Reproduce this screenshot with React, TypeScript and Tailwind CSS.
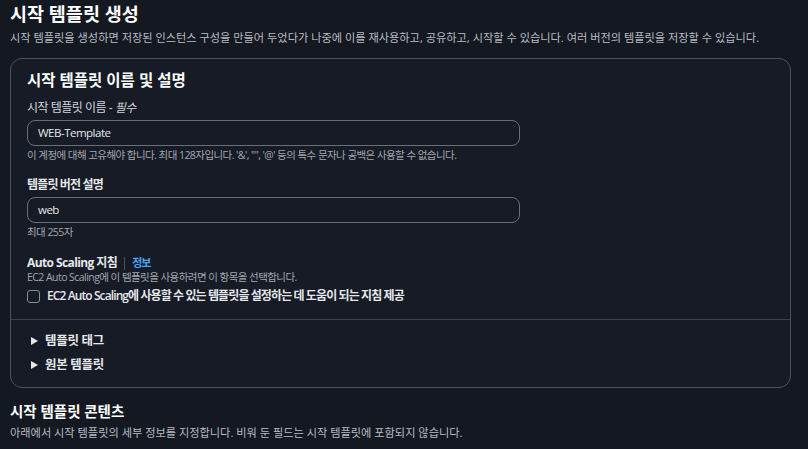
import React from 'react'

const FONT = { fontFamily: '"Open Sans", "Noto Sans CJK KR", sans-serif' }

function Field({ label, value, hint }: { label: React.ReactNode; value: string; hint: string }) {
  return (
    <div className="flex flex-col">
      <div className="text-[12px] tracking-[-0.5px] leading-[16px] text-[#d1d5db] mb-[4px]">{label}</div>
      <div className="w-[493px] h-[26px] rounded-[8px] border border-[#6b6e76] bg-[#161b25] flex items-center px-[10px] text-[11.5px] tracking-[-0.5px] text-[#e5e7eb]">
        {value}
      </div>
      <div className="text-[10.5px] tracking-[-0.55px] leading-[14px] text-[#a3a7b0] mt-[2px]">{hint}</div>
    </div>
  )
}

function Expander({ label }: { label: string }) {
  return (
    <div className="flex items-center gap-[7px] h-[24px]">
      <svg width="7" height="8" viewBox="0 0 7 8" className="ml-[4px]">
        <path d="M0 0 L7 4 L0 8 Z" fill="#e5e7eb" />
      </svg>
      <span className="text-[12.5px] font-bold tracking-[-0.3px] text-[#e5e7eb]">{label}</span>
    </div>
  )
}

export default function App() {
  return (
    <main style={FONT} className="w-[808px] h-[449px] overflow-hidden bg-[#141821] px-[10px] pt-[1px] text-white">
      <h1 className="text-[18.5px] font-bold leading-[26px] text-white">시작 템플릿 생성</h1>
      <p className="text-[11.2px] leading-[16px] text-[#b8bcc4] mt-[3px]">
        시작 템플릿을 생성하면 저장된 인스턴스 구성을 만들어 두었다가 나중에 이를 재사용하고, 공유하고, 시작할 수 있습니다. 여러 버전의 템플릿을 저장할 수 있습니다.
      </p>

      <section className="mt-[12px] w-[781px] rounded-[12px] border border-[#4e515a] bg-[#161b25]">
        <div className="px-[16px] pt-[10px] pb-[15px] flex flex-col">
          <h2 className="text-[15.5px] font-bold leading-[22px] text-white mb-[9px]">시작 템플릿 이름 및 설명</h2>

          <Field
            label={<>시작 템플릿 이름 - <i>필수</i></>}
            value="WEB-Template"
            hint={"이 계정에 대해 고유해야 합니다. 최대 128자입니다. '&', '\"', '@' 등의 특수 문자나 공백은 사용할 수 없습니다."}
          />

          <div className="mt-[15px]">
            <Field label={<b className="text-[#e5e7eb] tracking-[-0.85px]">템플릿 버전 설명</b>} value="web" hint="최대 255자" />
          </div>

          <div className="mt-[17px] flex items-center text-[12px] leading-[14px]">
            <span className="font-bold tracking-[-0.6px] text-[#e5e7eb]">Auto Scaling 지침</span>
            <span className="mx-[7px] h-[13px] w-px bg-[#4b4e57]" />
            <span className="font-bold tracking-[-1px] text-[#4aa3f0] text-[11px]">정보</span>
          </div>
          <div className="mt-[1px] text-[10.5px] tracking-[-0.55px] leading-[13px] text-[#a3a7b0]">
            EC2 Auto Scaling에 이 템플릿을 사용하려면 이 항목을 선택합니다.
          </div>
          <label className="mt-[4px] h-[16px] flex items-center gap-[7px]">
            <span className="w-[13px] h-[13px] rounded-[3px] border border-[#8b8e96] bg-[#161b25]" />
            <span className="text-[12px] font-semibold tracking-[-0.9px] text-[#e5e7eb]">
              EC2 Auto Scaling에 사용할 수 있는 템플릿을 설정하는 데 도움이 되는 지침 제공
            </span>
          </label>
        </div>

        <div className="border-t border-[#3f424b] px-[16px] pt-[9px] pb-[10px] flex flex-col">
          <Expander label="템플릿 태그" />
          <Expander label="원본 템플릿" />
        </div>
      </section>

      <h3 className="mt-[14px] text-[14.5px] font-bold leading-[20px] text-white">시작 템플릿 콘텐츠</h3>
      <p className="mt-[3px] text-[11.2px] leading-[16px] text-[#b8bcc4]">
        아래에서 시작 템플릿의 세부 정보를 지정합니다. 비워 둔 필드는 시작 템플릿에 포함되지 않습니다.
      </p>
    </main>
  )
}
